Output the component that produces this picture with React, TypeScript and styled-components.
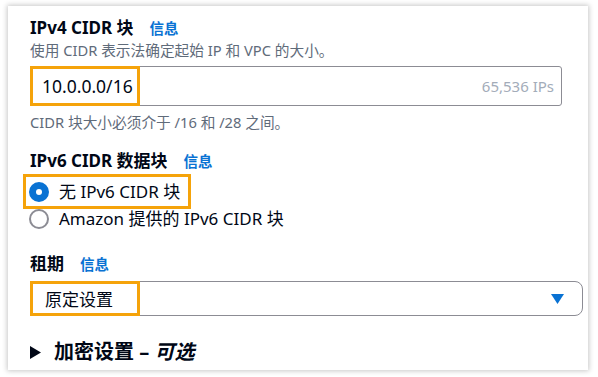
import * as React from "react";
import styled, { createGlobalStyle } from "styled-components";

const GlobalStyle = createGlobalStyle`
  html, body {
    margin: 0;
    padding: 0;
    background: #ffffff;
  }
  body {
    font-family: "Noto Sans", "Noto Sans CJK SC", sans-serif;
    color: #000716;
  }
`;

const SPage = styled.div`
  width: 598px;
  height: 377px;
  box-sizing: border-box;
  padding: 6px 10px 7px 8px;
`;

const SCard = styled.div`
  height: 100%;
  box-sizing: border-box;
  background: #ffffff;
  box-shadow: 0 0 5px 1px rgba(0, 0, 0, 0.22);
  padding: 11px 5px 0 22px;
  display: flex;
  flex-direction: column;
`;

const SField = styled.div<{ $gap?: number }>`
  display: flex;
  flex-direction: column;
  margin-bottom: ${(p) => p.$gap ?? 0}px;
`;

const SLabelRow = styled.div`
  display: flex;
  align-items: center;
  gap: 16px;
  height: 22px;
  font-size: 17px;
  font-weight: 700;
  line-height: 22px;
`;

const SInfo = styled.span`
  color: #0972d3;
  font-size: 14.5px;
  font-weight: 700;
`;

const SDesc = styled.div`
  height: 22px;
  font-size: 14.7px;
  line-height: 22px;
  color: #5f6b7a;
`;

const SInputWrap = styled.div`
  position: relative;
  margin: 5px 21px 0 0;
  height: 40px;
  box-sizing: border-box;
  border: 1px solid #8c8c94;
  border-radius: 3px;
  display: flex;
  align-items: center;
  justify-content: space-between;
  padding: 0 7px 0 11px;
`;

const SValue = styled.span`
  font-size: 17.5px;
  color: #000716;
`;

const SHint = styled.span`
  font-size: 15px;
  color: #a3acb9;
`;

const SHighlight = styled.div<{ $w: number; $h: number; $l?: number; $t?: number }>`
  position: absolute;
  left: ${(p) => p.$l ?? -1}px;
  top: ${(p) => p.$t ?? -1}px;
  width: ${(p) => p.$w}px;
  height: ${(p) => p.$h}px;
  box-sizing: border-box;
  border: 3px solid #f5a30a;
  pointer-events: none;
`;

const SConstraint = styled.div`
  height: 22px;
  font-size: 14.7px;
  line-height: 22px;
  color: #5f6b7a;
  margin-top: 5px;
`;

const SRadioGroup = styled.div`
  position: relative;
  display: flex;
  flex-direction: column;
  margin-top: 6px;
`;

const SRadioRow = styled.div`
  display: flex;
  align-items: center;
  gap: 10px;
  height: 27px;
  line-height: 27px;
  font-size: 17px;
`;

const SRadio = styled.span<{ $checked?: boolean }>`
  width: 20px;
  height: 20px;
  border-radius: 50%;
  box-sizing: border-box;
  margin-left: -1px;
  flex: none;
  ${(p) =>
    p.$checked
      ? `background: #0972d3; border: 7px solid #0972d3;`
      : `border: 2px solid #8c8c94; background: #fff;`}
  &::after {
    content: "";
    display: ${(p) => (p.$checked ? "block" : "none")};
    width: 6px;
    height: 6px;
    border-radius: 50%;
    background: #fff;
  }
`;

const SSelect = styled.div`
  position: relative;
  margin-top: 6px;
  height: 35px;
  box-sizing: border-box;
  border: 1px solid #8c8c94;
  border-radius: 8px;
  display: flex;
  align-items: center;
  justify-content: space-between;
  padding: 0 18px 0 14px;
  font-size: 17px;
`;

const SExpander = styled.div`
  display: flex;
  align-items: center;
  gap: 13px;
  height: 22px;
  line-height: 22px;
  font-size: 20px;
  font-weight: 700;
  margin-top: 25px;
`;

const SOptional = styled.i`
  font-style: italic;
`;

const Caret = () => (
  <svg width="13" height="10" viewBox="0 0 13 10">
    <polygon points="0,0 13,0 6.5,10" fill="#0972d3" />
  </svg>
);

const Arrow = () => (
  <svg width="11" height="13" viewBox="0 0 11 13">
    <polygon points="0,0 11,6.5 0,13" fill="#000716" />
  </svg>
);

const App = () => (
  <SPage>
    <GlobalStyle />
    <SCard>
      <SField $gap={17}>
        <SLabelRow>
          <span>IPv4 CIDR 块</span>
          <SInfo>信息</SInfo>
        </SLabelRow>
        <SDesc>使用 CIDR 表示法确定起始 IP 和 VPC 的大小。</SDesc>
        <SInputWrap>
          <SValue>10.0.0.0/16</SValue>
          <SHint>65,536 IPs</SHint>
          <SHighlight $w={110} $h={40} />
        </SInputWrap>
        <SConstraint>CIDR 块大小必须介于 /16 和 /28 之间。</SConstraint>
      </SField>

      <SField $gap={21}>
        <SLabelRow>
          <span>IPv6 CIDR 数据块</span>
          <SInfo>信息</SInfo>
        </SLabelRow>
        <SRadioGroup>
          <SRadioRow>
            <SRadio $checked />
            <span>无 IPv6 CIDR 块</span>
          </SRadioRow>
          <SRadioRow>
            <SRadio />
            <span>Amazon 提供的 IPv6 CIDR 块</span>
          </SRadioRow>
          <SHighlight $w={168} $h={35} $l={-7} $t={-4} />
        </SRadioGroup>
      </SField>

      <SField>
        <SLabelRow>
          <span>租期</span>
          <SInfo>信息</SInfo>
        </SLabelRow>
        <SSelect>
          <span>原定设置</span>
          <Caret />
          <SHighlight $w={110} $h={35} />
        </SSelect>
      </SField>

      <SExpander>
        <Arrow />
        <span>
          加密设置 – <SOptional>可选</SOptional>
        </span>
      </SExpander>
    </SCard>
  </SPage>
);

export default App;
